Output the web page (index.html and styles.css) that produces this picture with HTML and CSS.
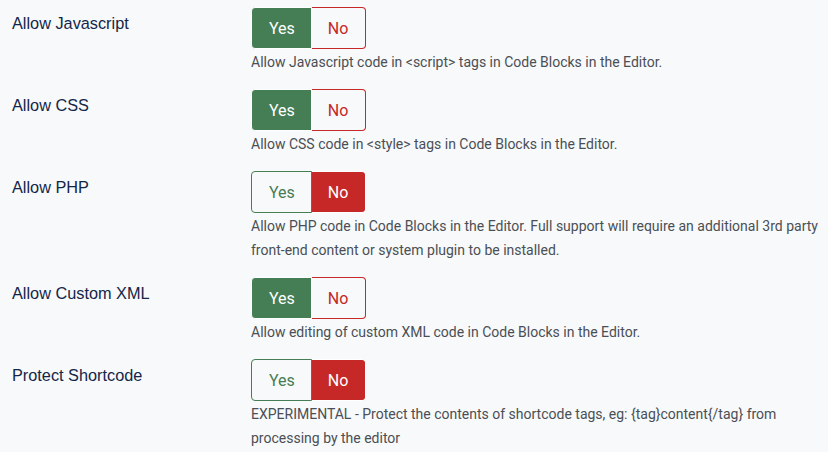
FILE: index.html
```html
<!DOCTYPE html>
<html lang="en">
<head>
    <meta charset="UTF-8">
    <meta name="viewport" content="width=device-width, initial-scale=1.0">
    <title>Code Block Options</title>
    <link rel="stylesheet" href="styles.css">
</head>
<body>

    <!-- Opcje edytora -->
    <div class="options">

        <div class="option-row">
            <div class="option-label">Allow Javascript</div>
            <div class="option-control">
                <div class="switch">
                    <span class="switch-yes active">Yes</span>
                    <span class="switch-no">No</span>
                </div>
                <p class="option-desc">Allow Javascript code in &lt;script&gt; tags in Code Blocks in the Editor.</p>
            </div>
        </div>

        <div class="option-row">
            <div class="option-label">Allow CSS</div>
            <div class="option-control">
                <div class="switch">
                    <span class="switch-yes active">Yes</span>
                    <span class="switch-no">No</span>
                </div>
                <p class="option-desc">Allow CSS code in &lt;style&gt; tags in Code Blocks in the Editor.</p>
            </div>
        </div>

        <div class="option-row">
            <div class="option-label">Allow PHP</div>
            <div class="option-control">
                <div class="switch">
                    <span class="switch-yes">Yes</span>
                    <span class="switch-no active">No</span>
                </div>
                <p class="option-desc">Allow PHP code in Code Blocks in the Editor. Full support will require an additional 3rd party front-end content or system plugin to be installed.</p>
            </div>
        </div>

        <div class="option-row">
            <div class="option-label">Allow Custom XML</div>
            <div class="option-control">
                <div class="switch">
                    <span class="switch-yes active">Yes</span>
                    <span class="switch-no">No</span>
                </div>
                <p class="option-desc">Allow editing of custom XML code in Code Blocks in the Editor.</p>
            </div>
        </div>

        <div class="option-row">
            <div class="option-label">Protect Shortcode</div>
            <div class="option-control">
                <div class="switch">
                    <span class="switch-yes">Yes</span>
                    <span class="switch-no active">No</span>
                </div>
                <p class="option-desc">EXPERIMENTAL - Protect the contents of shortcode tags, eg: {tag}content{/tag} from processing by the editor</p>
            </div>
        </div>

    </div>

</body>
</html>
```

FILE: styles.css
```css
body {
    margin: 0;
    padding: 7px 0 0 12px;
    background-color: #f8f9fa;
    font-family: Roboto, "Liberation Sans", sans-serif;
}

.options {
    display: flex;
    flex-direction: column;
    gap: 15px;
}

.option-row {
    display: grid;
    grid-template-columns: 239px 1fr;
}

.option-label {
    padding-top: 4px;
    font-family: "Liberation Sans", Arial, sans-serif;
    font-size: 16.3px;
    line-height: 24px;
    color: #132649;
}

.switch {
    display: inline-flex;
    height: 42px;
}

.switch span {
    display: flex;
    align-items: center;
    padding: 0 16px;
    font-size: 16px;
    border: 1px solid;
}

.switch-yes {
    padding-left: 17px !important;
    color: #457d54;
    border-color: #457d54;
    border-radius: 4px 0 0 4px;
}

.switch-no {
    padding-right: 17px !important;
    color: #c52827;
    border-color: #c52827;
    border-left: none !important;
    border-radius: 0 4px 4px 0;
}

.switch-yes.active {
    background-color: #457d54;
    color: white;
}

.switch-no.active {
    background-color: #c52827;
    color: white;
}

.option-desc {
    margin: 1px 0 0;
    font-size: 14px;
    line-height: 24px;
    color: #4a4f55;
    padding-right: 8px;
}
```
